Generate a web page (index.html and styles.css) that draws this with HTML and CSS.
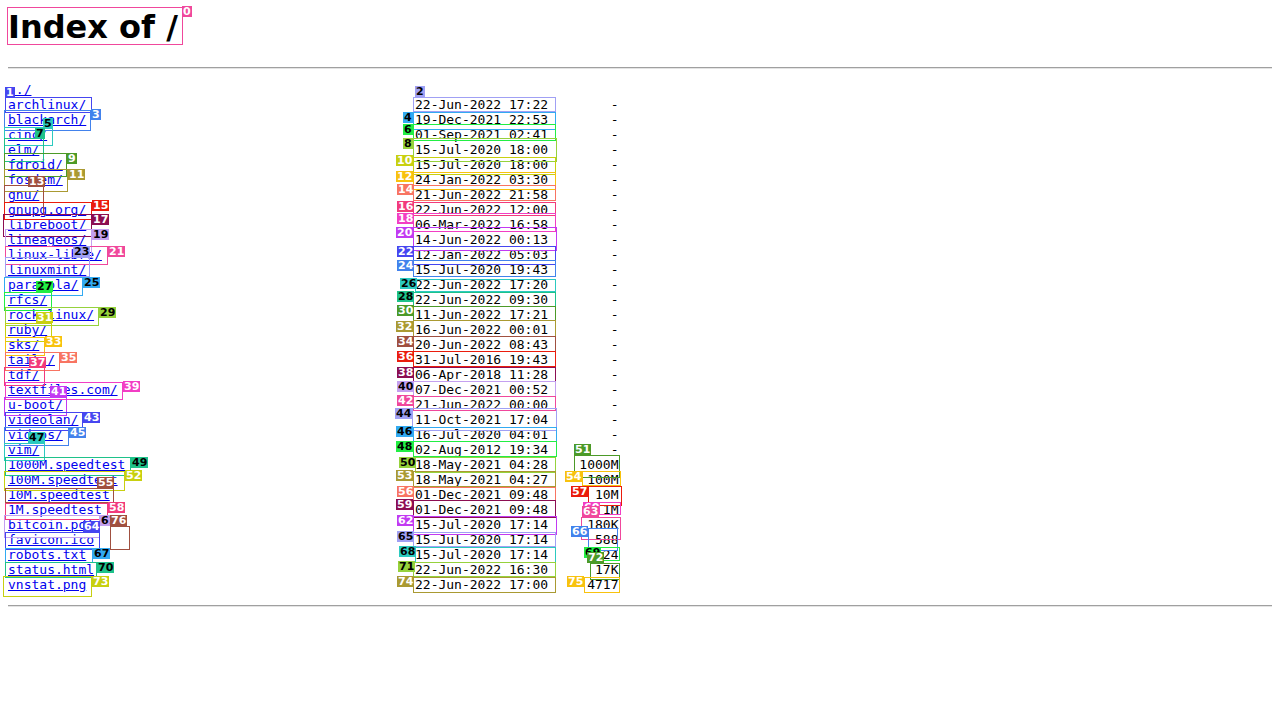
FILE: index.html
```html
<!DOCTYPE html>
<html>
<head>
<meta charset="utf-8">
<title>Index of /</title>
<link rel="stylesheet" href="styles.css">
</head>
<body>
<h1 class="title">Index of /</h1>
<hr class="rule">
<div class="listing">
<div class="row"><span class="name"><a href="../">../</a></span></div>
<div class="row"><span class="name"><a href="archlinux/">archlinux/</a></span><span class="date">22-Jun-2022 17:22</span><span class="size">-</span></div>
<div class="row"><span class="name"><a href="blackarch/">blackarch/</a></span><span class="date">19-Dec-2021 22:53</span><span class="size">-</span></div>
<div class="row"><span class="name"><a href="cinc/">cinc/</a></span><span class="date">01-Sep-2021 02:41</span><span class="size">-</span></div>
<div class="row"><span class="name"><a href="elm/">elm/</a></span><span class="date">15-Jul-2020 18:00</span><span class="size">-</span></div>
<div class="row"><span class="name"><a href="fdroid/">fdroid/</a></span><span class="date">15-Jul-2020 18:00</span><span class="size">-</span></div>
<div class="row"><span class="name"><a href="fosdem/">fosdem/</a></span><span class="date">24-Jan-2022 03:30</span><span class="size">-</span></div>
<div class="row"><span class="name"><a href="gnu/">gnu/</a></span><span class="date">21-Jun-2022 21:58</span><span class="size">-</span></div>
<div class="row"><span class="name"><a href="gnupg.org/">gnupg.org/</a></span><span class="date">22-Jun-2022 12:00</span><span class="size">-</span></div>
<div class="row"><span class="name"><a href="libreboot/">libreboot/</a></span><span class="date">06-Mar-2022 16:58</span><span class="size">-</span></div>
<div class="row"><span class="name"><a href="lineageos/">lineageos/</a></span><span class="date">14-Jun-2022 00:13</span><span class="size">-</span></div>
<div class="row"><span class="name"><a href="linux-libre/">linux-libre/</a></span><span class="date">12-Jan-2022 05:03</span><span class="size">-</span></div>
<div class="row"><span class="name"><a href="linuxmint/">linuxmint/</a></span><span class="date">15-Jul-2020 19:43</span><span class="size">-</span></div>
<div class="row"><span class="name"><a href="parabola/">parabola/</a></span><span class="date">22-Jun-2022 17:20</span><span class="size">-</span></div>
<div class="row"><span class="name"><a href="rfcs/">rfcs/</a></span><span class="date">22-Jun-2022 09:30</span><span class="size">-</span></div>
<div class="row"><span class="name"><a href="rockylinux/">rockylinux/</a></span><span class="date">11-Jun-2022 17:21</span><span class="size">-</span></div>
<div class="row"><span class="name"><a href="ruby/">ruby/</a></span><span class="date">16-Jun-2022 00:01</span><span class="size">-</span></div>
<div class="row"><span class="name"><a href="sks/">sks/</a></span><span class="date">20-Jun-2022 08:43</span><span class="size">-</span></div>
<div class="row"><span class="name"><a href="tails/">tails/</a></span><span class="date">31-Jul-2016 19:43</span><span class="size">-</span></div>
<div class="row"><span class="name"><a href="tdf/">tdf/</a></span><span class="date">06-Apr-2018 11:28</span><span class="size">-</span></div>
<div class="row"><span class="name"><a href="textfiles.com/">textfiles.com/</a></span><span class="date">07-Dec-2021 00:52</span><span class="size">-</span></div>
<div class="row"><span class="name"><a href="u-boot/">u-boot/</a></span><span class="date">21-Jun-2022 00:00</span><span class="size">-</span></div>
<div class="row"><span class="name"><a href="videolan/">videolan/</a></span><span class="date">11-Oct-2021 17:04</span><span class="size">-</span></div>
<div class="row"><span class="name"><a href="videos/">videos/</a></span><span class="date">16-Jul-2020 04:01</span><span class="size">-</span></div>
<div class="row"><span class="name"><a href="vim/">vim/</a></span><span class="date">02-Aug-2012 19:34</span><span class="size">-</span></div>
<div class="row"><span class="name"><a href="1000M.speedtest">1000M.speedtest</a></span><span class="date">18-May-2021 04:28</span><span class="size">1000M</span></div>
<div class="row"><span class="name"><a href="100M.speedtest">100M.speedtest</a></span><span class="date">18-May-2021 04:27</span><span class="size">100M</span></div>
<div class="row"><span class="name"><a href="10M.speedtest">10M.speedtest</a></span><span class="date">01-Dec-2021 09:48</span><span class="size">10M</span></div>
<div class="row"><span class="name"><a href="1M.speedtest">1M.speedtest</a></span><span class="date">01-Dec-2021 09:48</span><span class="size">1M</span></div>
<div class="row"><span class="name"><a href="bitcoin.pdf">bitcoin.pdf</a></span><span class="date">15-Jul-2020 17:14</span><span class="size">180K</span></div>
<div class="row"><span class="name"><a href="favicon.ico">favicon.ico</a></span><span class="date">15-Jul-2020 17:14</span><span class="size">588</span></div>
<div class="row"><span class="name"><a href="robots.txt">robots.txt</a></span><span class="date">15-Jul-2020 17:14</span><span class="size">124</span></div>
<div class="row"><span class="name"><a href="status.html">status.html</a></span><span class="date">22-Jun-2022 16:30</span><span class="size">17K</span></div>
<div class="row"><span class="name"><a href="vnstat.png">vnstat.png</a></span><span class="date">22-Jun-2022 17:00</span><span class="size">4717</span></div>
</div>
<hr class="rule">
<div class="marks" id="marks"></div>
<script src="script.js"></script>
</body>
</html>
```

FILE: styles.css
```css
html, body {
  background: #ffffff;
}
body {
  margin: 8px;
  color: #000000;
  font-family: "DejaVu Sans", sans-serif;
}
.title {
  margin: 0 0 21.44px 0;
  font-family: "DejaVu Sans", sans-serif;
  font-weight: bold;
  font-size: 32px;
  line-height: 38px;
}
.rule {
  margin: 8px 0;
  border: 0;
  border-top: 1px solid #a0a0a0;
  border-bottom: 1px solid #e4e4e4;
  height: 0;
}
.listing {
  margin: 13px 0;
  font-family: "DejaVu Sans Mono", monospace;
  font-size: 13px;
  line-height: 15px;
}
.row {
  height: 15px;
  white-space: nowrap;
}
.name,
.date,
.size {
  display: inline-block;
  white-space: pre;
}
.name {
  width: 52ch;
}
.name a {
  color: #0000ee;
  text-decoration: underline;
}
.date {
  width: 17ch;
}
.size {
  width: 9ch;
  text-align: right;
}
.marks {
  position: absolute;
  left: 0;
  top: 0;
  width: 0;
  height: 0;
}
.box {
  position: absolute;
  box-sizing: border-box;
  border: 1px solid;
}
.tag {
  position: absolute;
  height: 11px;
  padding: 0 1px;
  font-family: "DejaVu Sans", sans-serif;
  font-weight: bold;
  font-size: 11px;
  line-height: 11px;
  color: #ffffff;
  white-space: nowrap;
}
.tag.dark {
  color: #000000;
}
```

FILE: script.js
```js
var PALETTE = [
  '#f0489c', '#4646f0', '#a0a0f4', '#4282ec', '#32aaf2', '#2ccac0', '#22ee44',
  '#1ec28a', '#96d23c', '#4c9a28', '#c8d010', '#aa9a32', '#f8c20e', '#a05040',
  '#f87462', '#ea1c0c', '#f23a7c', '#8c0e52', '#f23ec4', '#c4a0f0', '#c23af2'
];
var DARK = [2, 4, 5, 6, 7, 8, 19];

// [n, labelX, labelY, boxX1, boxY1, boxX2, boxY2]
var MARKS = [
  [0, 182, 6, 7, 7, 183, 45],
  [1, 5, 87, 5, 97, 92, 113],
  [2, 415, 86, 413, 97, 556, 112],
  [3, 91, 109, 4, 110, 91, 131],
  [4, 403, 112, 413, 112, 556, 130],
  [5, 43, 118, 4, 127, 53, 146],
  [6, 403, 124, 413, 124, 556, 141],
  [7, 35, 128, 4, 138, 44, 162],
  [8, 403, 138, 413, 138, 557, 162],
  [9, 67, 153, 4, 153, 67, 177],
  [10, 396, 155, 413, 157, 556, 175],
  [11, 68, 169, 4, 169, 68, 192],
  [12, 396, 171, 413, 172, 556, 190],
  [13, 28, 176, 4, 185, 44, 215],
  [14, 397, 184, 413, 185, 556, 201],
  [15, 92, 200, 4, 202, 92, 220],
  [16, 397, 201, 413, 202, 556, 216],
  [17, 92, 214, 3, 214, 92, 237],
  [18, 397, 213, 413, 213, 556, 232],
  [19, 92, 229, 5, 229, 92, 258],
  [20, 396, 227, 413, 227, 557, 251],
  [21, 108, 246, 5, 246, 108, 265],
  [22, 397, 246, 413, 246, 556, 265],
  [23, 73, 246, 5, 257, 90, 277],
  [24, 397, 260, 413, 260, 556, 277],
  [25, 83, 277, 4, 277, 83, 296],
  [26, 400, 278, 415, 279, 556, 292],
  [27, 36, 281, 4, 292, 52, 311],
  [28, 397, 291, 413, 292, 556, 307],
  [29, 99, 307, 5, 307, 99, 326],
  [30, 397, 305, 413, 306, 556, 321],
  [31, 36, 312, 5, 323, 52, 342],
  [32, 396, 321, 413, 320, 556, 337],
  [33, 45, 336, 5, 337, 45, 356],
  [34, 397, 336, 413, 336, 556, 352],
  [35, 60, 352, 5, 352, 60, 371],
  [36, 397, 351, 413, 351, 556, 367],
  [37, 29, 357, 4, 367, 45, 386],
  [38, 397, 367, 413, 367, 556, 382],
  [39, 123, 381, 5, 382, 123, 400],
  [40, 397, 381, 413, 381, 556, 397],
  [41, 50, 386, 4, 397, 67, 416],
  [42, 397, 395, 413, 396, 556, 411],
  [43, 83, 412, 5, 412, 83, 431],
  [44, 395, 408, 412, 408, 557, 431],
  [45, 69, 427, 4, 427, 69, 446],
  [46, 396, 426, 413, 427, 557, 442],
  [47, 28, 432, 4, 443, 45, 461],
  [48, 396, 441, 413, 441, 557, 457],
  [49, 131, 457, 5, 457, 131, 476],
  [50, 399, 457, 415, 457, 556, 473],
  [51, 574, 444, 574, 455, 620, 478],
  [52, 125, 470, 4, 471, 125, 491],
  [53, 396, 470, 413, 471, 556, 487],
  [54, 565, 471, 582, 471, 621, 486],
  [55, 97, 477, 5, 488, 114, 503],
  [56, 397, 486, 413, 487, 556, 501],
  [57, 571, 486, 588, 486, 622, 506],
  [58, 108, 502, 5, 503, 108, 520],
  [59, 396, 499, 413, 500, 556, 518],
  [60, 583, 502, 599, 502, 621, 515],
  [61, 100, 515, 4, 515, 100, 538],
  [62, 397, 515, 413, 516, 557, 535],
  [63, 582, 506, 581, 517, 621, 540],
  [64, 83, 521, 5, 532, 100, 550],
  [65, 397, 531, 413, 532, 556, 547],
  [66, 571, 526, 588, 528, 618, 551],
  [67, 93, 548, 5, 548, 93, 563],
  [68, 399, 546, 415, 547, 556, 563],
  [69, 584, 547, 600, 547, 620, 561],
  [70, 97, 562, 5, 562, 97, 578],
  [71, 398, 561, 413, 562, 556, 577],
  [72, 587, 552, 590, 563, 620, 580],
  [73, 92, 576, 3, 576, 92, 597],
  [74, 397, 576, 413, 577, 556, 593],
  [75, 567, 576, 584, 577, 620, 593],
  [76, 110, 515, 110, 526, 130, 550]
];

(function () {
  var layer = document.getElementById('marks');
  MARKS.forEach(function (m) {
    var n = m[0];
    var idx = n % 21;
    var color = PALETTE[idx];
    var box = document.createElement('div');
    box.className = 'box';
    box.style.left = m[3] + 'px';
    box.style.top = m[4] + 'px';
    box.style.width = (m[5] - m[3]) + 'px';
    box.style.height = (m[6] - m[4]) + 'px';
    box.style.borderColor = color;
    layer.appendChild(box);
    var tag = document.createElement('span');
    tag.className = DARK.indexOf(idx) >= 0 ? 'tag dark' : 'tag';
    tag.style.left = m[1] + 'px';
    tag.style.top = m[2] + 'px';
    tag.style.background = color;
    tag.textContent = String(n);
    layer.appendChild(tag);
  });
})();
```
